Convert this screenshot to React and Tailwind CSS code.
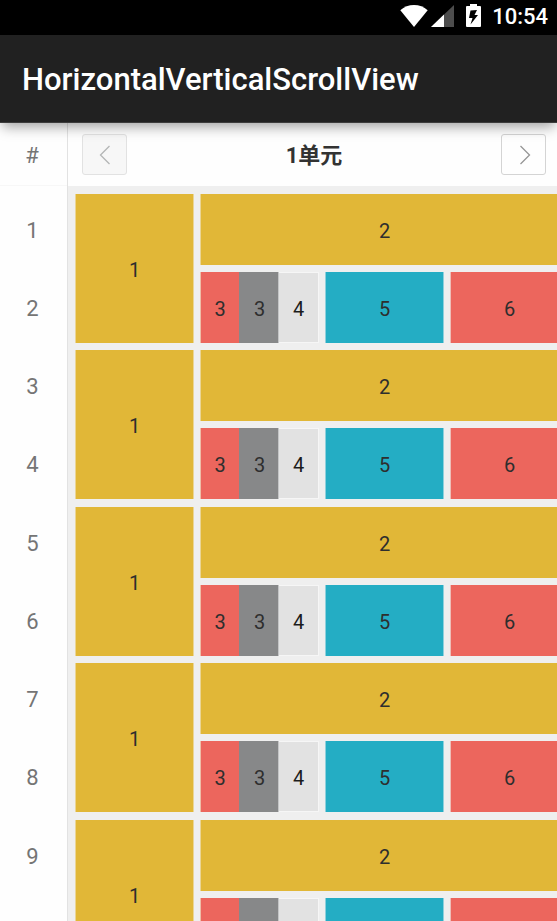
import React from "react";

const GROUPS = [0, 1, 2, 3, 4];

function WifiIcon() {
  return (
    <svg width="28" height="22" viewBox="0 0 28 22" fill="#fff" aria-hidden="true">
      <path d="M14 22 L0.3 5.2 C4 1.8 9 0 14 0 C19 0 24 1.8 27.7 5.2 Z" />
    </svg>
  );
}

function SignalIcon() {
  return (
    <svg width="23" height="22" viewBox="0 0 23 22" aria-hidden="true">
      <path d="M23 0 V22 H0 Z" fill="#4d4d4d" />
      <path d="M13 9.5 V22 H0 Z" fill="#fff" />
    </svg>
  );
}

function BatteryIcon() {
  return (
    <svg width="15" height="23" viewBox="0 0 15 23" aria-hidden="true">
      <path d="M4 0 H11 V2 H14 Q15 2 15 3 V22 Q15 23 14 23 H1 Q0 23 0 22 V3 Q0 2 1 2 H4 Z" fill="#fff" />
      <path d="M11 6 L4.5 6.5 L3 14 H6.5 L4.5 20.5 L12 11 H8.5 Z" fill="#000" />
    </svg>
  );
}

function Chevron({ d, stroke }) {
  return (
    <svg width="12" height="20" viewBox="0 0 12 20" fill="none" stroke={stroke} strokeWidth="1.3" aria-hidden="true">
      <path d={d} />
    </svg>
  );
}

function Cell({ className = "", children }) {
  return (
    <div className={`flex items-center justify-center pt-[2px] leading-none ${className}`}>{children}</div>
  );
}

function CardGroup() {
  return (
    <div className="grid grid-cols-[repeat(4,119px)] grid-rows-[71px_71px] gap-x-[6px] gap-y-[7px] pb-[7px] even:pb-2">
      <Cell className="row-span-2 border-x border-[#ead596] bg-[#e1b737]">1</Cell>
      <Cell className="col-span-3 border-x border-[#ead596] bg-[#e1b737]">2</Cell>
      <div className="grid grid-cols-[39px_40px_40px]">
        <Cell className="border-l border-[#eebfa8] bg-[#ec665d]">3</Cell>
        <Cell className="border-r border-[#c4c5c6] bg-[#878889] pl-[2px]">3</Cell>
        <Cell className="border-y border-r border-[#f6f6f6] bg-[#e2e2e2] text-[#1c1c1c]">4</Cell>
      </div>
      <Cell className="border-x border-[#8fd0dc] bg-[#24adc4]">5</Cell>
      <Cell className="border-x border-[#eebfb8] bg-[#ec665d]">6</Cell>
    </div>
  );
}

export default function App() {
  return (
    <div className="flex h-screen flex-col overflow-hidden bg-[#efefef] font-['Roboto','Noto_Sans_CJK_SC',sans-serif] text-[#2e2e2e]">
      <div className="flex h-[35px] shrink-0 items-center justify-end bg-black pr-[9px] text-white">
        <div className="flex items-center gap-[3px] pb-1">
          <WifiIcon />
          <SignalIcon />
        </div>
        <div className="pb-1 pl-3">
          <BatteryIcon />
        </div>
        <time className="pb-[2px] pl-[11px] text-[22px] font-medium leading-6">10:54</time>
      </div>

      <header className="relative z-10 flex h-[88px] shrink-0 items-center border-b border-[#3c3c3c] bg-[#212121] px-[22px] pt-[3px] shadow-[0_6px_12px_-2px_rgba(0,0,0,0.36)]">
        <h1 className="text-[31px] font-medium leading-9 text-white">HorizontalVerticalScrollView</h1>
      </header>

      <main className="flex min-h-0 flex-1">
        <aside className="w-[68px] shrink-0 overflow-hidden border-r border-[#e2e2e2] bg-[#fefefe] text-[22px] text-[#757575]">
          <div className="mb-2 flex h-[63px] items-center justify-center border-b border-[#f7f7f7] pr-[3px] pt-[2px]">#</div>
          {GROUPS.map((g) => (
            <div key={g} className="grid grid-rows-[71px_71px] gap-[7px] pb-[7px] pr-[2px] odd:pb-2">
              <Cell>{g * 2 + 1}</Cell>
              <Cell>{g * 2 + 2}</Cell>
            </div>
          ))}
        </aside>

        <section className="flex min-w-0 flex-1 flex-col">
          <div className="flex h-[63px] shrink-0 items-center justify-between bg-[#fefefe] pl-[14px] pr-[11px]">
            <button
              type="button"
              aria-label="Previous"
              className="flex h-[41px] w-[45px] items-center justify-center rounded-[3px] border border-[#e2e2e2] bg-[#f7f7f7]"
            >
              <Chevron d="M10.5 1 L1.5 10 L10.5 19" stroke="#b4b6b6" />
            </button>
            <h2 className="pt-[2px] text-[22px] font-bold leading-8 text-[#333]">1单元</h2>
            <button
              type="button"
              aria-label="Next"
              className="flex h-[41px] w-[45px] items-center justify-center rounded-[3px] border border-[#d4d4d4] bg-[#fefefe] pl-[2px]"
            >
              <Chevron d="M1.5 1 L10.5 10 L1.5 19" stroke="#969696" />
            </button>
          </div>
          <div className="min-h-0 flex-1 overflow-hidden pl-[7px] pt-2 text-[20px]">
            {GROUPS.map((g) => (
              <CardGroup key={g} />
            ))}
          </div>
        </section>
      </main>
    </div>
  );
}
